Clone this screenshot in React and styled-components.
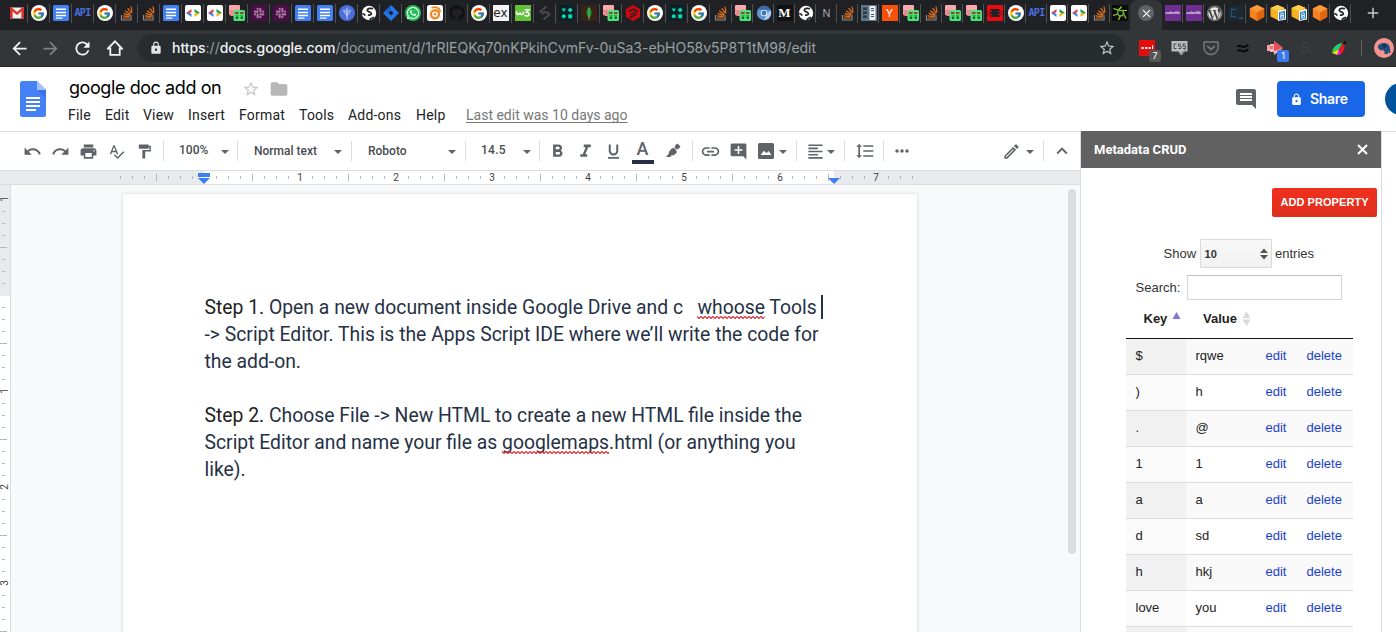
import React from 'react';
import styled, { createGlobalStyle, css } from 'styled-components';
import {
  MdUndo, MdRedo, MdPrint, MdSpellcheck, MdFormatPaint, MdFormatBold, MdFormatItalic,
  MdFormatUnderlined, MdLink, MdAddComment, MdFormatAlignLeft, MdFormatLineSpacing,
  MdMoreHoriz, MdOutlineEdit, MdExpandLess, MdComment, MdArrowBack, MdArrowForward, MdRefresh,
  MdLock, MdStarBorder, MdFolder, MdClose, MdAdd,
} from 'react-icons/md';
import { FcGoogle } from 'react-icons/fc';
import { FaSlack, FaGithub, FaWhatsapp, FaWordpress } from 'react-icons/fa';

const Global = createGlobalStyle`
  *, *::before, *::after { box-sizing: border-box; }
  html, body { margin: 0; padding: 0; overflow: hidden; background: #fff; }
  body { font-family: Roboto, "Liberation Sans", sans-serif; }
  svg { display: block; flex: none; }
`;

const Window = styled.div`
  width: 1396px;
  height: 632px;
  display: flex;
  flex-direction: column;
  overflow: hidden;
`;

/* ---------- Browser tab strip ---------- */

const TabStrip = styled.div`
  height: 30px;
  flex: none;
  display: flex;
  background: #202124;
  padding-left: 6px;
`;

const Tab = styled.div`
  width: ${(p) => p.$w || 22}px;
  height: 26px;
  flex: none;
  display: flex;
  align-items: center;
  justify-content: center;
  padding-right: ${(p) => (p.$w ? 0 : 1)}px;
  position: relative;
  ${(p) => !p.$last && css`
    &::after {
      content: '';
      position: absolute;
      right: 0;
      top: 4px;
      height: 19px;
      width: 1px;
      background: #4d5054;
    }
  `}
`;

const ActiveTab = styled.div`
  width: 32px;
  height: 30px;
  flex: none;
  display: flex;
  justify-content: center;
  padding-top: 5px;
  background: #323639;
  border-radius: 7px 7px 0 0;
`;

const CloseDot = styled.div`
  width: 16px;
  height: 16px;
  border-radius: 50%;
  background: #5f6368;
  color: #fff;
  display: flex;
  align-items: center;
  justify-content: center;
`;

const NewTab = styled.div`
  margin-left: 13px;
  height: 26px;
  display: flex;
  align-items: center;
  color: #c6c8ca;
`;

const Tile = styled.div`
  width: 16px;
  height: 16px;
  flex: none;
  border-radius: ${(p) => p.$r || 0}px;
  background: ${(p) => p.$bg || 'transparent'};
  color: ${(p) => p.$fg || '#fff'};
  font: ${(p) => p.$font || '700 10px/16px "Liberation Sans", sans-serif'};
  display: flex;
  align-items: center;
  justify-content: center;
  white-space: nowrap;
`;

const Svg16 = (p) => <svg width="16" height="16" viewBox="0 0 16 16" {...p} />;

const Gmail = () => (
  <Svg16>
    <rect x="1" y="2.5" width="14" height="11" fill="#f2f2f2" />
    <path d="M1 2.5h2.6v11H1zM12.4 2.5H15v11h-2.6z" fill="#d93025" />
    <path d="M1 2.5h1.6L8 7l5.4-4.5H15v2L8 10 1 4.5z" fill="#e0352b" />
  </Svg16>
);
const Google = () => <Tile $bg="#fff" $r={8}><FcGoogle size={13} /></Tile>;
const Doc = () => (
  <Svg16>
    <rect width="16" height="16" rx="1.5" fill="#4380f2" />
    <path d="M3 3.5h10v1.5H3zM3 6.7h10v1.5H3zM3 9.8h10v1.5H3zM3 12.5h6.5v1.2H3z" fill="#fff" />
  </Svg16>
);
const ApiText = styled.span`
  letter-spacing: -0.6px;
`;
const Api = () => <Tile $fg="#4a6fe0" $font={'700 10px/16px "DejaVu Sans Mono", monospace'}><ApiText>API</ApiText></Tile>;
const Stack = () => (
  <Svg16>
    <path d="M2.5 10v5h9.5v-5" fill="none" stroke="#8a8d90" strokeWidth="1.2" />
    <path d="M4 13h6.5M4.100 10.800l6.400.8M4.700 8.400l6.100 2M6.200 5.800l5.200 3.700M8.700 3.200l3.700 5.100M12 1.500l1 6" stroke="#e8701a" strokeWidth="1.2" fill="none" />
  </Svg16>
);
const Code = () => (
  <Svg16>
    <rect width="16" height="16" rx="2" fill="#fff" />
    <path d="M1 8l5.500-4v3L4.800 8z" fill="#db4437" />
    <path d="M1 8l5.500 4V9L4.800 8z" fill="#3f7ff0" />
    <path d="M15 8l-5.500-4v3L11.200 8z" fill="#0f9d58" />
    <path d="M15 8l-5.500 4V9L11.200 8z" fill="#f4b400" />
  </Svg16>
);
const Robot = () => (
  <Svg16>
    <rect x="0" y="0" width="11" height="10" rx="1" fill="#f7a9ad" />
    <path d="M0 5h5v6H1.500z" fill="#ee8790" />
    <rect x="4.5" y="5" width="11.5" height="11" rx="1.5" fill="#4fe07a" />
    <path d="M6 7.200h3.500v1.600H6zM11 7.200h3.500v1.600H11z" fill="#a01818" />
    <circle cx="8" cy="12.7" r="1.3" fill="#0d5c22" />
    <circle cx="12.8" cy="12.7" r="1.3" fill="#0d5c22" />
    <path d="M6.500 10.800h8" stroke="#147a31" strokeWidth=".8" strokeDasharray="3 1.5" />
  </Svg16>
);
const Slack = () => <Tile $bg="#4a0d45" $r={1} $fg="#a27a9f"><FaSlack size={12} /></Tile>;
const Tree = () => (
  <Svg16>
    <circle cx="8" cy="8" r="8" fill="#4a6fdc" />
    <path d="M8 14V2.500M8 10.500L5 7V4.500M8 10.500L11 7V4.500M8 7.500L6.500 5.500M8 7.500l1.500-2" stroke="#dfe6ff" strokeWidth=".9" fill="none" />
  </Svg16>
);
const Globe = () => (
  <Svg16>
    <circle cx="8" cy="8" r="7.2" fill="#fff" />
    <path d="M12 3.800C9.800 2.800 6.200 3.300 6.200 5.300c.1 1.800 4.200 1.300 4.200 3.400-.1 1.400-2 1.700-3.400 1.200M1.200 8.500c1.600.1 2.500.9 3 2.100M9 14.800c.3-1.600 2.500-2.200 4-2.600" stroke="#202124" strokeWidth="1.7" fill="none" />
  </Svg16>
);
const Jira = () => (
  <Svg16>
    <path d="M8 0l8 8-8 8-8-8z" fill="#2477ee" />
    <path d="M8 0v5.200L4.500 8.700 1.800 6.200z" fill="#1458c4" opacity=".6" />
    <path d="M8 5.500L10.500 8 8 10.500 5.500 8z" fill="#202124" />
  </Svg16>
);
const Whats = () => <Tile $bg="#25c05a" $r={8}><FaWhatsapp size={14} /></Tile>;
const Swirl = () => (
  <Svg16>
    <rect width="16" height="16" rx="2.5" fill="#fff" />
    <circle cx="8" cy="9.2" r="4" fill="none" stroke="#f08a24" strokeWidth="2.4" />
    <circle cx="8" cy="9.2" r="1.3" fill="#f08a24" />
    <path d="M4.500 2.800C8 1.200 13 2.500 13.200 7" fill="none" stroke="#f08a24" strokeWidth="1.8" />
  </Svg16>
);
const W3 = () => (
  <Svg16>
    <rect width="16" height="16" fill="#62c136" />
    <path d="M1.500 6.500c0 4 3.300 4 3.500.8.200 3.200 3.600 3.200 3.600-.8M9.800 4.800h4l-2.300 2.500c3 0 3.400 3.800.4 3.800-1.200 0-2-.5-2.300-1.300" stroke="#fff" strokeWidth="1.5" fill="none" />
  </Svg16>
);
const DarkS = () => (
  <Svg16><path d="M9.500 1.500L3.500 6.500l3 2.500M6.500 7l3 .500M9.500 7l3 2.500-6 5" fill="none" stroke="#4b4e50" strokeWidth="1.8" /></Svg16>
);
const Shapes = () => (
  <Svg16>
    <rect width="16" height="16" rx="1" fill="#0a2126" />
    <path d="M2.500 3.500H7L4.750 7z" fill="#10d6b0" />
    <path d="M11.200 2.500L13.800 5l-2.600 2.600L8.600 5z" fill="#10d6b0" />
    <circle cx="4.75" cy="11.2" r="2" fill="#10d6b0" />
    <rect x="9.2" y="9.3" width="4" height="4" fill="#10d6b0" />
  </Svg16>
);
const Mongo = () => (
  <Svg16>
    <rect width="16" height="16" fill="#3a2216" />
    <path d="M8 1.500c3.600 4.500 3.200 8.500 0 11.500-3.200-3-3.600-7 0-11.500z" fill="#19913f" />
    <path d="M8 3v12" stroke="#79c256" strokeWidth=".8" />
  </Svg16>
);
const RedHex = () => (
  <Svg16>
    <path d="M8 0l7 4v8l-7 4-7-4V4z" fill="#d3080c" />
    <path d="M4 6.500l5-2.500 3 2-7 4M4.500 12.800l7.500-4" stroke="#202124" strokeWidth="1.4" fill="none" />
  </Svg16>
);
const Chromium = () => (
  <Svg16>
    <circle cx="8" cy="8" r="7.2" fill="#5e93cf" />
    <path d="M1.800 4.200A7.200 7.200 0 0 1 14.500 5H8z" fill="#3a6aa8" />
    <path d="M14.500 5A7.200 7.200 0 0 1 8 15.200L11 9z" fill="#a8cdf0" />
    <circle cx="8" cy="8" r="3.3" fill="#e8f1fb" />
    <circle cx="8" cy="8" r="2.4" fill="#3f73b8" />
  </Svg16>
);
const Columns = () => (
  <Svg16>
    <rect x="0" y="0" width="16" height="16" fill="#5d7689" />
    <rect x="8.5" y="1" width="6" height="14" fill="#eef2f4" />
    <path d="M2 2.500h4V5H2zM2 6.500h4V9H2zM2 10.500h4V13H2z" fill="#2b3a46" />
    <path d="M10 3.500h3M10 5.500h3M10 9.500h3M10 11.500h3" stroke="#465a68" />
  </Svg16>
);
const RedFrame = () => (
  <Svg16>
    <path fillRule="evenodd" d="M0 1.500A1.500 1.500 0 0 1 1.500 0h13A1.500 1.500 0 0 1 16 1.500v13a1.500 1.500 0 0 1-1.500 1.500h-13A1.500 1.500 0 0 1 0 14.500zM3.200 4v8h9.600V4z" fill="#ec0a10" />
    <path d="M3 6.500h2M11 6.500h2M3 9.500h2M11 9.500h2" stroke="#ec0a10" />
    <path d="M0 7h3M13 7h3M0 9.500h3M13 9.500h3" stroke="#71090c" strokeWidth=".8" />
  </Svg16>
);
const Star6 = () => (
  <Svg16>
    <rect width="16" height="16" fill="#090c07" />
    <path d="M1.500 3.500l5 1.800M6.200 5.500L9.500 1.500M9.500 5.500h5.500M11 8l3 5.500M8.500 10.500L6.500 15M6 9L1 10.500" stroke="#b2cf22" strokeWidth="1.2" />
    <path d="M6.200 5.500h4L12 8l-2 2.800H7L5.500 8z" fill="none" stroke="#5fae3a" strokeWidth="1.4" />
  </Svg16>
);
const Colorlib = () => <Tile $bg="#6e2f90" $fg="#f1e8f6" $font={'700 4px/16px "Liberation Sans", sans-serif'}>colorlib</Tile>;
const Cmd = () => (
  <Svg16>
    <rect x=".5" y=".5" width="15" height="15" fill="#1c2930" />
    <path d="M7.500 5.500V4.300h-4v7.400h4v-1.200M11 13h4" fill="none" stroke="#1e5876" strokeWidth="1.3" />
  </Svg16>
);
const Cube = () => (
  <Svg16>
    <path d="M8 0l7.200 3.500V12L8 16 .8 12V3.500z" fill="#f5811f" />
    <path d="M8 7.200l7.200-3.700V12L8 16z" fill="#e0650f" />
    <path d="M8 0l7.200 3.500L8 7.200.8 3.500z" fill="#fb9a3c" />
  </Svg16>
);
const CubeB = () => (
  <Svg16>
    <path d="M7.500 0l7 3v8l-7 4-7-3.500V3z" fill="#f5b120" />
    <path d="M7.500 0l7 3-7 3.200L.5 3z" fill="#fccf50" />
    <path d="M8 6l8-2v10.500L8 16z" fill="#fff" />
    <path d="M9 7.200L15 5.800v7.800L9 14.900z" fill="#1e7ab8" />
    <path d="M10.700 8.300v5l2.800-.6V10.500l-2.600.5 2.300-.6V7.900z" fill="none" stroke="#fff" strokeWidth=".8" />
  </Svg16>
);
const Octocat = () => <Tile $fg="#101214"><FaGithub size={16} /></Tile>;
const Express = () => <Tile $bg="#f4f4f4" $fg="#222" $font={'400 12px/14px "DejaVu Sans", sans-serif'}>ex</Tile>;
const Medium = () => <Tile $bg="#111" $font={'700 13px/16px "Liberation Serif", serif'}>M</Tile>;
const LetterN = () => <Tile $fg="#a9abad" $font={'400 11px/16px "Liberation Sans", sans-serif'}>N</Tile>;
const Hacker = () => <Tile $bg="#f9500b" $font={'400 11px/16px Inter, sans-serif'}>Y</Tile>;
const Wordpress = () => <Tile $bg="#464342" $r={8} $fg="#e6e6e6"><FaWordpress size={15} /></Tile>;

const wideTabs = [Gmail, Google, Doc, Api, Google, Stack, Stack, Doc, Code, Code, Robot, Slack, Slack, Doc, Doc, Tree,
  Globe, Jira, Whats, Swirl, Octocat, Google, Express, W3, DarkS, Shapes, Mongo, Robot, RedHex, Google, Shapes, Google, Stack];
const narrowTabs = [Robot, Chromium, Medium, Globe, LetterN, Stack, Columns, Hacker, Robot, Stack, Robot, Robot,
  RedFrame, Google, Api, Code, Code, Stack];
const lastTabs = [Colorlib, Colorlib, Wordpress, Cmd, Cube, CubeB, CubeB, Cube, Globe];

/* ---------- Browser address bar ---------- */

const AddressBar = styled.div`
  height: 37px;
  flex: none;
  display: flex;
  align-items: center;
  background: #323639;
  border-bottom: 1px solid #26282b;
  padding-left: 5px;
  color: #f1f3f4;
`;

const NavButton = styled.div`
  width: ${(p) => p.$w || 32}px;
  flex: none;
  display: flex;
  justify-content: center;
  color: ${(p) => (p.$off ? '#7d8184' : '#f1f3f4')};
`;

const Omnibox = styled.div`
  margin-left: 6px;
  width: 987px;
  height: 28px;
  border-radius: 14px;
  background: #272c2f;
  display: flex;
  align-items: center;
  padding: 0 9px 0 11px;
`;

const Url = styled.div`
  flex: 1;
  margin-left: 9px;
  font: 400 14px/20px Inter, Roboto, sans-serif;
  letter-spacing: -0.03px;
  color: #9aa0a6;
  white-space: nowrap;
`;
const Host = styled.span`
  color: #f1f3f4;
  font-weight: 500;
`;

const Extension = styled.div`
  position: relative;
  width: 32px;
  height: 28px;
  flex: none;
  display: flex;
  align-items: center;
  justify-content: center;
`;

const ExtensionRow = styled.div`
  display: flex;
  align-items: center;
  margin-left: 6px;
`;

const Badge = styled.div`
  position: absolute;
  left: 18px;
  top: 16px;
  width: 12px;
  height: 12px;
  border-radius: 2px;
  background: ${(p) => p.$bg};
  color: #fff;
  font: 400 9px/12px Inter, sans-serif;
  text-align: center;
`;

const BarDivider = styled.div`
  width: 1px;
  height: 16px;
  margin: 0 12px 0 6px;
  background: #5f6368;
`;

const Avatar = styled.div`
  width: 20px;
  height: 20px;
  flex: none;
  border-radius: 50%;
  background: #f4938f;
  display: flex;
  align-items: center;
  justify-content: center;
`;

/* ---------- Docs header ---------- */

const DocsHeader = styled.header`
  height: 65px;
  flex: none;
  display: flex;
  background: #fff;
  border-bottom: 1px solid #dadce0;
  padding-left: 20px;
  overflow: hidden;
`;

const Logo = styled.div`
  padding-top: 14px;
  width: 26px;
`;

const TitleBlock = styled.div`
  margin-left: 22px;
  flex: 1;
`;

const TitleRow = styled.div`
  display: flex;
  align-items: center;
  height: 24px;
  margin-top: 10px;
`;

const Title = styled.h1`
  margin: -2px 0 0 1px;
  width: 173px;
  font: 400 18px/24px Inter, Roboto, sans-serif;
  letter-spacing: -0.42px;
  color: #000;
  white-space: nowrap;
`;

const FolderIcon = styled.span`
  margin-left: 9px;
  color: #b7b7b7;
`;

const MenuRow = styled.nav`
  display: flex;
  height: 22px;
  margin-top: 3px;
  font: 400 14px/22px Roboto, sans-serif;
  letter-spacing: 0.2px;
  color: #202124;
`;

const MenuItem = styled.span`
  width: ${(p) => p.$w}px;
  white-space: nowrap;
`;

const LastEdit = styled.span`
  color: #777;
  letter-spacing: 0;
  text-decoration: underline;
  text-underline-offset: 2px;
  text-decoration-skip-ink: none;
  white-space: nowrap;
`;

const HeaderRight = styled.div`
  display: flex;
  align-items: flex-start;
  width: 162px;
  flex: none;
  padding-top: 14px;
`;

const CommentIcon = styled.div`
  margin-top: 6px;
  width: 43px;
  flex: none;
  color: #5f6368;
`;

const ShareButton = styled.button`
  width: 88px;
  height: 36px;
  flex: none;
  border: 0;
  padding: 0 0 0 13px;
  border-radius: 4px;
  background: #1967e8;
  color: #fff;
  display: flex;
  align-items: center;
  gap: 7px;
  font: 600 14px/20px Inter, Roboto, sans-serif;
  letter-spacing: -0.3px;
`;

const UserDot = styled.div`
  width: 32px;
  height: 32px;
  flex: none;
  margin: 2px 0 0 20px;
  border-radius: 50%;
  background: #00529c;
`;

/* ---------- Main split ---------- */

const Main = styled.div`
  display: flex;
  flex: 1;
  min-height: 0;
`;

const Editor = styled.div`
  width: 1080px;
  flex: none;
  display: flex;
  flex-direction: column;
  min-height: 0;
`;

const Toolbar = styled.div`
  height: 39px;
  flex: none;
  display: flex;
  align-items: center;
  padding: 0 4px 0 19px;
  border-bottom: 1px solid #dadce0;
  color: #5f6368;
  background: #fff;
`;

const Tool = styled.div`
  width: ${(p) => p.$w || 28}px;
  flex: none;
  display: flex;
  justify-content: center;
  padding-right: 1px;
`;

const Separator = styled.div`
  width: 1px;
  height: 20px;
  flex: none;
  background: #dadce0;
  margin-left: ${(p) => p.$l || 0}px;
  margin-right: ${(p) => p.$r || 0}px;
`;

const Picker = styled.div`
  width: ${(p) => p.$w}px;
  flex: none;
  display: flex;
  justify-content: space-between;
  align-items: center;
  padding: 0 ${(p) => p.$pr}px 0 ${(p) => p.$pl}px;
  font: 500 12px/20px Roboto, sans-serif;
  letter-spacing: ${(p) => p.$ls || 0}px;
  color: #484c50;
  white-space: nowrap;
`;

const Number = styled.span`
  margin-top: -2px;
`;

const Caret = styled.i`
  width: 8px;
  height: 4px;
  flex: none;
  margin-top: 2px;
  background: #5f6368;
  clip-path: polygon(0 0, 100% 0, 50% 100%);
`;

const Spacer = styled.div`
  flex: 1;
`;

const TextColor = styled.div`
  width: 22px;
  height: 24px;
  flex: none;
  margin-top: 1px;
  border-bottom: 4px solid #263145;
  font: 500 18px/18px Roboto, sans-serif;
  text-align: center;
`;

/* ---------- Rulers ---------- */

const HRuler = styled.div`
  position: relative;
  height: 14px;
  flex: none;
  display: flex;
  padding-left: 114px;
  background: linear-gradient(90deg, #e8eaed 204px, #fff 204px 834px, #e8eaed 834px);
  border-bottom: 1px solid #dadce0;
`;

const HMark = styled.div`
  width: 12px;
  height: 13px;
  flex: none;
  display: flex;
  align-items: center;
  justify-content: center;
  font: 400 10px/13px Roboto, sans-serif;
  color: #3c4043;
  padding-left: ${(p) => (p.$tick ? 1 : 0)}px;
  &::before {
    content: '';
    display: ${(p) => (p.$tick ? 'block' : 'none')};
    width: 1px;
    height: ${(p) => p.$tick}px;
    background: #b4b7bb;
  }
`;

const Marker = styled.svg`
  position: absolute;
  left: ${(p) => p.$x}px;
  top: 2px;
`;

const Canvas = styled.div`
  flex: 1;
  display: flex;
  min-height: 0;
  background: #f8f9fa;
`;

const VRuler = styled.div`
  width: 11px;
  flex: none;
  padding-top: 8px;
  overflow: hidden;
  background: linear-gradient(180deg, #e8eaed 111px, #fff 111px);
  border-right: 1px solid #dadce0;
`;

const VMark = styled.div`
  width: 10px;
  height: 12px;
  display: flex;
  align-items: center;
  padding-left: ${(p) => (p.$tick === 3 ? 2 : 0)}px;
  &::before {
    content: '';
    display: ${(p) => (p.$tick ? 'block' : 'none')};
    height: 1px;
    width: ${(p) => p.$tick}px;
    background: #b4b7bb;
  }
`;

const VNumber = styled.span`
  width: 10px;
  height: 12px;
  display: block;
  font: 400 10px/12px Roboto, sans-serif;
  text-align: center;
  color: #3c4043;
  transform: rotate(-90deg);
`;

/* ---------- Page ---------- */

const Page = styled.article`
  width: 794px;
  margin: 9px 0 0 112px;
  padding: 100px 0 0 81.5px;
  background: #fff;
  box-shadow: 0 0 3px rgba(60, 64, 67, 0.22);
  flex: none;
`;

const Line = styled.div`
  height: 27px;
  font: 400 19.33px/27px Roboto, sans-serif;
  color: #263145;
  white-space: pre;
  display: flex;
`;
const Strong = styled.span`
  color: #222;
`;
const Misspelt = styled.span`
  position: relative;
`;
const Wave = styled.svg`
  position: absolute;
  left: 0;
  top: 21.5px;
  width: 100%;
  height: 3px;
`;
const Cursor = styled.i`
  width: 2px;
  height: 24px;
  margin: 1px 0 0 4px;
  background: #263145;
`;

const Misspelling = ({ children, id }) => (
  <Misspelt>
    {children}
    <Wave>
      <defs>
        <pattern id={id} width="4" height="3" patternUnits="userSpaceOnUse">
          <path d="M-1 .5L0 .5 2 2.500 4 .5 5 .5" fill="none" stroke="#e8202a" strokeWidth="1.1" />
        </pattern>
      </defs>
      <rect width="100%" height="3" fill={`url(#${id})`} />
    </Wave>
  </Misspelt>
);

const Track = styled.div`
  margin: 4px 4px 0 auto;
  width: 8px;
  height: 365px;
  border-radius: 4px;
  background: #dadce0;
`;

/* ---------- Add-on sidebar ---------- */

const Sidebar = styled.aside`
  width: 302px;
  flex: none;
  margin-top: -1px;
  border-left: 1px solid #dadce0;
  border-right: 1px solid #dadce0;
  background: #fff;
  position: relative;
  display: flex;
  flex-direction: column;
  overflow: hidden;
  font: 400 13px/18px "Liberation Sans", Arial, sans-serif;
  color: #333;
`;

const SidebarHeader = styled.div`
  height: 37px;
  flex: none;
  display: flex;
  align-items: center;
  justify-content: space-between;
  padding: 0 13px 0 13px;
  background: #616161;
  color: #fff;
  font: 700 13px/20px Roboto, sans-serif;
`;

const AddButton = styled.button`
  width: 105px;
  height: 29px;
  flex: none;
  margin: 20px 4px 0 auto;
  padding: 0;
  border: 0;
  border-radius: 2px;
  background: linear-gradient(#f0301e, #df2f1d);
  color: #fff;
  font: 700 11px/27px "Liberation Sans", Arial, sans-serif;
  letter-spacing: 0.06px;
  white-space: nowrap;
`;

const LengthRow = styled.label`
  display: flex;
  align-items: center;
  height: 28px;
  margin: 22px 0 0 82.5px;
  gap: 3.5px;
`;

const LengthText = styled.span`
  padding-top: 1px;
`;

const Select = styled.div`
  width: 72px;
  height: 29px;
  display: flex;
  align-items: center;
  justify-content: space-between;
  padding: 1px 3px 0 4px;
  border: 1px solid #d9d9d9;
  border-radius: 1px;
  background: linear-gradient(#f8f8f8, #f1f1f1);
  font-weight: 700;
  font-size: 11px;
`;

const SearchRow = styled.label`
  display: flex;
  align-items: center;
  height: 25px;
  margin: 8px 0 0 54.5px;
  gap: 7px;
`;

const SearchBox = styled.div`
  width: 155px;
  height: 25px;
  border: 1px solid #d5d5d5;
  border-top-color: #bfbfbf;
`;

const Table = styled.div`
  width: 227px;
  margin-left: 45px;
  color: #222;
`;

const HeadRow = styled.div`
  height: 39px;
  display: flex;
  align-items: flex-start;
  padding-top: 10px;
  border-bottom: 1px solid #111;
  font-weight: 700;
`;

const HeadCell = styled.div`
  display: flex;
  width: 60px;
  padding-left: ${(p) => p.$pl}px;
  gap: 5px;
`;

const SortIcon = styled.svg`
  margin-top: 1px;
`;

const Row = styled.div`
  display: grid;
  grid-template-columns: 60px 70px 41px 56px;
  height: 36px;
  line-height: 34px;
  border-bottom: 1px solid #ddd;
  background: ${(p) => (p.$odd ? '#f9f9f9' : '#fff')};
`;

const Cell = styled.div`
  padding-left: 9.5px;
  height: 35px;
  background: ${(p) => (p.$sorted ? (p.$odd ? '#f1f1f1' : '#fafafa') : 'transparent')};
  color: ${(p) => (p.$link ? '#1a41ce' : '#222')};
`;

const rows = [
  ['$', 'rqwe'], [')', 'h'], ['.', '@'], ['1', '1'], ['a', 'a'], ['d', 'sd'], ['h', 'hkj'], ['love', 'you'], ['', ''],
];

const menu = [['File', 37], ['Edit', 38], ['View', 45], ['Insert', 51], ['Format', 60], ['Tools', 49], ['Add-ons', 68], ['Help', 50]];

const hMarks = Array.from({ length: 67 }, (_, i) => i - 7);
const vMarks = Array.from({ length: 38 }, (_, i) => i - 8);

const tickSize = (n) => {
  if (n % 8 === 0) return 0;
  return Math.abs(n % 8) === 4 ? 7 : 3;
};

export default function App() {
  return (
    <Window>
      <Global />
      <TabStrip>
        {wideTabs.map((Icon, i) => <Tab key={i}><Icon /></Tab>)}
        {narrowTabs.map((Icon, i) => <Tab key={i} $w={21}><Icon /></Tab>)}
        <Tab $w={20} $last><Star6 /></Tab>
        <ActiveTab><CloseDot><MdClose size={13} /></CloseDot></ActiveTab>
        {lastTabs.map((Icon, i) => <Tab key={i} $w={21}><Icon /></Tab>)}
        <NewTab><MdAdd size={18} /></NewTab>
      </TabStrip>

      <AddressBar>
        <NavButton $w={28}><MdArrowBack size={21} /></NavButton>
        <NavButton $w={35} $off><MdArrowForward size={21} /></NavButton>
        <NavButton $w={29}><MdRefresh size={21} /></NavButton>
        <NavButton $w={35}>
          <svg width="16" height="16" viewBox="0 0 16 16"><path d="M1 8.500L8 1.300l7 7.200h-2.300v6.300H3.300V8.500z" fill="none" stroke="#f1f3f4" strokeWidth="1.8" /></svg>
        </NavButton>
        <Omnibox>
          <MdLock size={14} color="#e2e4e6" />
          <Url><Host>https</Host>://<Host>docs.google.com</Host>/document/d/1rRIEQKq70nKPkihCvmFv-0uSa3-ebHO58v5P8T1tM98/edit</Url>
          <MdStarBorder size={18} color="#c0c3c6" />
        </Omnibox>
        <ExtensionRow>
          <Extension>
            <Svg16>
              <rect width="16" height="16" fill="#e30d0d" />
              <path d="M2.500 7h2.200v2H2.500zM6 7h2.200v2H6zM9.500 7h2.200v2H9.500zM13 5.500h1.200V9H13z" fill="#fff" />
            </Svg16>
            <Badge $bg="#555">7</Badge>
          </Extension>
          <Extension>
            <svg width="17" height="17" viewBox="0 0 17 17">
              <path d="M.5 1h16v10.500H12L9.500 15l-2-3.500h-7z" fill="#b9bcbd" />
              <path d="M8 12l2.500 2.500 4-5" stroke="#8d9193" strokeWidth="1.5" fill="none" />
              <path d="M5.500 4H3v4.500h2.500M10 4H7.500v2.200H10v2.300H7.500M14.500 4H12v2.200h2.500v2.300H12" stroke="#44484a" fill="none" />
            </svg>
          </Extension>
          <Extension>
            <Svg16>
              <path d="M1 2h14v5.500a7 7 0 0 1-14 0z" fill="none" stroke="#75797b" strokeWidth="1.5" strokeLinejoin="round" />
              <path d="M4.700 6.300L8 9.400l3.300-3.100" fill="none" stroke="#75797b" strokeWidth="1.8" strokeLinecap="round" />
            </Svg16>
          </Extension>
          <Extension>
            <Svg16><path d="M2.500 6.800c2.500-3 4.500 1.500 7.500-.2l3.500-1.600M2.500 11.300c2.500-3 4.500 1.500 7.500-.2l3.500-1.600" fill="none" stroke="#070808" strokeWidth="2" /></Svg16>
          </Extension>
          <Extension>
            <Svg16>
              <path d="M0 5h3v6H0z" fill="#f2a3a3" />
              <path d="M3 4h4V1l9 7-9 7v-3H3z" fill="#f3b9b9" />
              <path d="M7 1l9 7-9 3z" fill="#ec4c56" />
              <path d="M3 6h3v3H3z" fill="#e96c72" />
            </Svg16>
            <Badge $bg="#3c78f0">1</Badge>
          </Extension>
          <Extension><Tile $fg="#3d4144" $font={'400 14px/16px Inter, sans-serif'}>S.</Tile></Extension>
          <Extension>
            <Svg16>
              <path d="M1 13C1 8 6 3 12.500 2.500L8 9z" fill="#27d82c" />
              <path d="M1 13l7-4-1.500 6z" fill="#f2df1c" />
              <path d="M8 9l4.500-6.500C15 7 13 12 10 14z" fill="#e8161d" />
              <path d="M8 9l2 5-4 1.500z" fill="#e822d8" />
              <path d="M3 9l5-5v5z" fill="#16bfe0" />
              <path d="M10 4.500L15 .5v3z" fill="#08090a" />
            </Svg16>
          </Extension>
        </ExtensionRow>
        <BarDivider />
        <Avatar>
          <svg width="14" height="13" viewBox="0 0 14 13">
            <path d="M.8 5.500C.8 2.500 4 .800 7.500 1c3.500.2 5.500 2.800 5.500 6l.5 4h-2V8.500L10.800 12H7.500V9.500L6 8 3.500 8.500 2 7z" fill="#1e4f7c" />
            <circle cx="7.5" cy="4" r="2" fill="#143452" />
          </svg>
        </Avatar>
      </AddressBar>

      <DocsHeader>
        <Logo>
          <svg width="26" height="36" viewBox="0 0 26 36">
            <path d="M2.500 0H17l9 9v24.500a2.500 2.500 0 0 1-2.500 2.500h-21A2.500 2.500 0 0 1 0 33.500v-31A2.500 2.500 0 0 1 2.500 0z" fill="#4481f4" />
            <path d="M17 0l9 9h-9z" fill="#a3c2fa" />
            <path d="M17.500 9H26v8.500z" fill="#3a6fd8" opacity=".7" />
            <path d="M6 16h14v2H6zM6 20h14v2H6zM6 24h14v2H6zM6 28h10v2H6z" fill="#fff" />
          </svg>
        </Logo>
        <TitleBlock>
          <TitleRow>
            <Title>google doc add on</Title>
            <MdStarBorder size={18} color="#c4c4c4" />
            <FolderIcon><MdFolder size={20} /></FolderIcon>
          </TitleRow>
          <MenuRow>
            {menu.map(([label, w]) => <MenuItem key={label} $w={w}>{label}</MenuItem>)}
            <LastEdit>Last edit was 10 days ago</LastEdit>
          </MenuRow>
        </TitleBlock>
        <HeaderRight>
          <CommentIcon><MdComment size={24} /></CommentIcon>
          <ShareButton><MdLock size={13} />Share</ShareButton>
          <UserDot />
        </HeaderRight>
      </DocsHeader>

      <Main>
        <Editor>
          <Toolbar>
            <Tool><MdUndo size={19} /></Tool>
            <Tool><MdRedo size={19} /></Tool>
            <Tool><MdPrint size={19} /></Tool>
            <Tool><MdSpellcheck size={17} /></Tool>
            <Tool><MdFormatPaint size={17} /></Tool>
            <Separator $l={4} />
            <Picker $w={73} $pl={15} $pr={8}><Number>100%</Number><Caret /></Picker>
            <Separator />
            <Picker $w={113} $pl={16} $pr={9}>Normal text<Caret /></Picker>
            <Separator />
            <Picker $w={113} $pl={16} $pr={9}>Roboto<Caret /></Picker>
            <Separator />
            <Picker $w={73} $pl={15} $pr={8} $ls={0.3}><Number>14.5</Number><Caret /></Picker>
            <Separator $r={4} />
            <Tool><MdFormatBold size={21} /></Tool>
            <Tool><MdFormatItalic size={21} /></Tool>
            <Tool><MdFormatUnderlined size={19} /></Tool>
            <Tool $w={30}><TextColor>A</TextColor></Tool>
            <Tool $w={30}>
              <svg width="16" height="16" viewBox="0 0 16 16"><path d="M10.500 2l2-1.500 3 3L14 5.500l-2.500 1-2-2zM8.800 4.800l2.600 2.600.3 2.400-3.300 2.700-1.500-.4L5.400 14H1l3-3.500-.3-1.300 2.700-3.500z" fill="#5f6368" /></svg>
            </Tool>
            <Separator $l={4} $r={4} />
            <Tool><MdLink size={21} /></Tool>
            <Tool><MdAddComment size={19} /></Tool>
            <Tool $w={26}>
              <svg width="16" height="16" viewBox="0 0 16 16"><path fillRule="evenodd" d="M1.500 0h13A1.500 1.500 0 0 1 16 1.500v13a1.500 1.500 0 0 1-1.500 1.500h-13A1.500 1.500 0 0 1 0 14.500v-13A1.500 1.500 0 0 1 1.500 0zM2.500 12h11l-3-4-1.900 2.200L6 7.800z" fill="#5f6368" /></svg>
            </Tool>
            <Caret />
            <Separator $l={9} $r={8} />
            <Tool $w={22}><MdFormatAlignLeft size={19} /></Tool>
            <Caret />
            <Separator $l={9} $r={6} />
            <Tool><MdFormatLineSpacing size={20} /></Tool>
            <Separator $l={4} $r={4} />
            <Tool><MdMoreHoriz size={20} /></Tool>
            <Spacer />
            <Tool><MdOutlineEdit size={19} /></Tool>
            <Caret />
            <Separator $l={9} $r={4} />
            <Tool><MdExpandLess size={22} /></Tool>
          </Toolbar>

          <HRuler>
            {hMarks.map((n) => (
              <HMark key={n} $tick={tickSize(n)}>{n % 8 === 0 && n !== 0 ? n / 8 : null}</HMark>
            ))}
            <Marker $x={198} width="12" height="11" viewBox="0 0 12 11"><path d="M0 0h12v4H0zM0 5h12l-6 6z" fill="#3f7df5" /></Marker>
            <Marker $x={828} width="12" height="11" viewBox="0 0 12 11"><path d="M0 5h12l-6 6z" fill="#3f7df5" /></Marker>
          </HRuler>

          <Canvas>
            <VRuler>
              {vMarks.map((n) => (
                <VMark key={n} $tick={tickSize(n)}>
                  {n % 8 === 0 && n !== 0 ? <VNumber>{Math.abs(n / 8)}</VNumber> : null}
                </VMark>
              ))}
            </VRuler>
            <Page>
              <Line>
                <Strong>Step 1. </Strong>
                <span>Open a new document inside Google Drive and c   </span>
                <Misspelling id="wave-a">whoose</Misspelling>
                <span> Tools</span>
                <Cursor />
              </Line>
              <Line>-&gt; Script Editor. This is the Apps Script IDE where we’ll write the code for</Line>
              <Line>the add-on.</Line>
              <Line />
              <Line>
                <Strong>Step 2. </Strong>
                <span>Choose File -&gt; New HTML to create a new HTML file inside the</span>
              </Line>
              <Line>
                <span>Script Editor and name your file as </span>
                <Misspelling id="wave-b">googlemaps</Misspelling>
                <span>.html (or anything you</span>
              </Line>
              <Line>like).</Line>
            </Page>
            <Track />
          </Canvas>
        </Editor>

        <Sidebar>
          <SidebarHeader>
            Metadata CRUD
            <svg width="11" height="11" viewBox="0 0 11 11"><path d="M1 1l9 9M10 1l-9 9" stroke="#fff" strokeWidth="2" /></svg>
          </SidebarHeader>
          <AddButton>ADD PROPERTY</AddButton>
          <LengthRow>
            <LengthText>Show</LengthText>
            <Select>
              10
              <svg width="8" height="12" viewBox="0 0 8 12"><path d="M0 5h8L4 .500zM0 7h8L4 11.500z" fill="#555" /></svg>
            </Select>
            <LengthText>entries</LengthText>
          </LengthRow>
          <SearchRow>Search:<SearchBox /></SearchRow>
          <Table>
            <HeadRow>
              <HeadCell $pl={17.5}>
                Key
                <SortIcon width="9" height="14" viewBox="0 0 9 14"><path d="M.5 8h8l-4-7z" fill="#8374e0" /></SortIcon>
              </HeadCell>
              <HeadCell $pl={17}>
                Value
                <SortIcon width="9" height="15" viewBox="0 0 9 15"><path d="M.5 7h8L4.500.500zM.5 8.500h8L4.500 15z" fill="#dadada" /></SortIcon>
              </HeadCell>
            </HeadRow>
            {rows.map(([k, v], i) => (
              <Row key={i} $odd={i % 2 === 0}>
                <Cell $sorted $odd={i % 2 === 0}>{k}</Cell>
                <Cell>{v}</Cell>
                <Cell $link>{k && 'edit'}</Cell>
                <Cell $link>{k && 'delete'}</Cell>
              </Row>
            ))}
          </Table>
        </Sidebar>
      </Main>
    </Window>
  );
}
